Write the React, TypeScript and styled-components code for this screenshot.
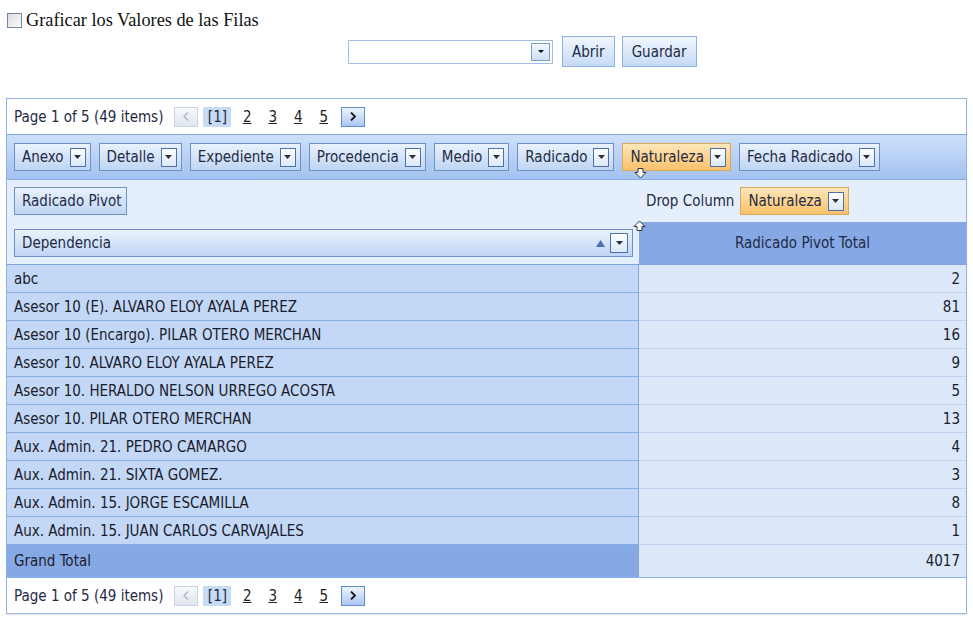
import React from "react";
import styled, { createGlobalStyle, css } from "styled-components";

const GlobalStyle = createGlobalStyle`
  html, body { margin: 0; padding: 0; background: #fff; }
  body { font-family: "DejaVu Sans Condensed", "DejaVu Sans", sans-serif; font-size: 15px; color: #1f2a44; }
`;

const Page = styled.div`
  width: 973px;
  height: 621px;
  overflow: hidden;
  position: relative;
`;

const CheckRow = styled.label`
  display: flex;
  align-items: center;
  gap: 4px;
  padding: 10px 0 0 7px;
  height: 21px;
  font-family: "Liberation Serif", serif;
  font-size: 18.3px;
  color: #111;
`;

const CheckBox = styled.span`
  width: 13px;
  height: 13px;
  border: 1px solid #6f86a6;
  background: linear-gradient(135deg, #dcdcdc, #fbfbfb);
  box-sizing: content-box;
`;

const ToolRow = styled.div`
  display: flex;
  align-items: center;
  gap: 7px;
  margin-top: 5px;
  padding-left: 348px;
  height: 31px;
`;

const Combo = styled.div`
  width: 205px;
  height: 24px;
  box-sizing: border-box;
  border: 1px solid #a2bde6;
  background: #fff;
  display: flex;
  justify-content: flex-end;
  align-items: center;
  padding-right: 2px;
  margin-right: 2px;
`;

const ComboBtn = styled.span`
  width: 19px;
  height: 18px;
  box-sizing: border-box;
  border: 1px solid #7b9dd2;
  background: linear-gradient(#f3f7fd, #cddff6);
  display: flex;
  align-items: center;
  justify-content: center;
`;

const Btn = styled.button`
  height: 31px;
  padding: 0 9px;
  border: 1px solid #8eb0e6;
  background: linear-gradient(#f1f6fe, #c6dbf6);
  font-family: inherit;
  font-size: 15px;
  color: #1f2a44;
`;

const Pivot = styled.div`
  margin: 31px 0 0 6px;
  width: 961px;
  box-sizing: border-box;
  border: 1px solid #8eb3ea;
  border-bottom-color: #9fbde8;
  position: relative;
  box-shadow: 0 1px 1px #e3e6ea;
`;

const Pager = styled.div<{ $bottom?: boolean }>`
  height: 35px;
  display: flex;
  align-items: center;
  padding-left: 7px;
  background: #fff;
  ${(p) =>
    p.$bottom
      ? css`
          border-top: 1px solid #8eb3ea;
        `
      : css`
          border-bottom: 1px solid #7fa6e3;
        `}
`;

const PagerSummary = styled.span`
  margin-right: 11px;
  white-space: nowrap;
`;

const PagerNav = styled.span<{ $enabled?: boolean }>`
  width: 24px;
  height: 20px;
  box-sizing: border-box;
  display: inline-flex;
  align-items: center;
  justify-content: center;
  ${(p) =>
    p.$enabled
      ? css`
          border: 1px solid #5e8bd4;
          background: linear-gradient(#eef4fd, #a9c7f1);
        `
      : css`
          border: 1px solid #c8d4e4;
          background: linear-gradient(#f7f8fa, #dfe6ef);
        `}
`;

const PageCurrent = styled.span`
  margin-left: 5px;
  width: 28px;
  height: 20px;
  display: inline-flex;
  align-items: center;
  justify-content: center;
  background: #c8dbf5;
  margin-right: 3px;
`;

const PageLink = styled.span`
  width: 25.5px;
  text-align: center;
  text-decoration: underline;
  color: #222;
`;

const FilterBand = styled.div`
  height: 44px;
  background: linear-gradient(#cde0fa, #a3c2ef);
  border-bottom: 1px solid #86ace5;
  display: flex;
  align-items: center;
  gap: 8px;
  padding: 0 0 0 7px;
`;

const Field = styled.div<{ $active?: boolean }>`
  height: 28px;
  box-sizing: border-box;
  display: flex;
  align-items: center;
  gap: 6px;
  padding: 0 4px 0 7px;
  white-space: nowrap;
  border: 1px solid #6f90c7;
  background: linear-gradient(#eaf2fd, #bfd5f4);
  color: #1f2a44;
  ${(p) =>
    p.$active &&
    css`
      border-color: #d9a85c;
      background: linear-gradient(#fde6b8, #fbc26d);
    `}
`;

const FieldGrow = styled(Field)`
  flex: 1;
  justify-content: space-between;
`;

const DropBtn = styled.span<{ $big?: boolean }>`
  width: ${(p) => (p.$big ? 18 : 16)}px;
  height: ${(p) => (p.$big ? 20 : 19)}px;
  box-sizing: border-box;
  border: 1px solid #4d70ab;
  background: linear-gradient(#ffffff, #dbe7f8);
  display: flex;
  align-items: center;
  justify-content: center;
`;

const Grid = styled.div`
  display: grid;
  grid-template-columns: 632px 327px;
`;

const AreaCell = styled.div`
  height: 42px;
  background: #e4eefc;
  display: flex;
  align-items: center;
  padding: 0 7px;
`;

const RowArea = styled(AreaCell)`
  height: 43px;
  box-sizing: border-box;
  border-bottom: 1px solid #7fa6e3;
  padding: 0 6px 0 7px;
`;

const DropLabel = styled.span`
  margin-right: 6px;
`;

const TotalHeader = styled.div`
  height: 43px;
  box-sizing: border-box;
  background: #86a9e5;
  border-bottom: 1px solid #7fa6e3;
  display: flex;
  align-items: center;
  justify-content: center;
`;

const RowHead = styled.div<{ $total?: boolean }>`
  height: ${(p) => (p.$total ? 32 : 28)}px;
  box-sizing: border-box;
  display: flex;
  align-items: center;
  padding-left: 7px;
  background: ${(p) => (p.$total ? "#86a9e5" : "#c3d8f6")};
  border-right: 1px solid #7fa6e3;
  border-bottom: 1px solid ${(p) => (p.$total ? "#86a9e5" : "#86ace7")};
  color: #1b1b2b;
  white-space: nowrap;
`;

const DataCell = styled.div<{ $total?: boolean }>`
  height: ${(p) => (p.$total ? 32 : 28)}px;
  box-sizing: border-box;
  display: flex;
  align-items: center;
  justify-content: flex-end;
  padding-right: 6px;
  background: #dce8f9;
  border-bottom: 1px solid ${(p) => (p.$total ? "#dce8f9" : "#bed3f1")};
  color: #1b1b2b;
`;

const SortTri = styled.span`
  display: flex;
  align-items: center;
  gap: 5px;
`;

const DragArrow = styled.svg<{ $x: number; $y: number }>`
  position: absolute;
  left: ${(p) => p.$x}px;
  top: ${(p) => p.$y}px;
`;

const Tri = () => (
  <svg width="7" height="4" viewBox="0 0 7 4">
    <path d="M0 0H7L3.5 4Z" fill="#2a2f3a" />
  </svg>
);

const Dd = ({ big }: { big?: boolean }) => (
  <DropBtn $big={big}>
    <Tri />
  </DropBtn>
);

const Chevron = ({ dir, color }: { dir: "l" | "r"; color: string }) => (
  <svg width="6" height="9" viewBox="0 0 6 9">
    <path
      d={dir === "l" ? "M5 0.5L1 4.5L5 8.5" : "M1 0.5L5 4.5L1 8.5"}
      fill="none"
      stroke={color}
      strokeWidth={dir === "r" ? 1.8 : 1.2}
    />
  </svg>
);

const PagerBar = ({ bottom }: { bottom?: boolean }) => (
  <Pager $bottom={bottom}>
    <PagerSummary>Page 1 of 5 (49 items)</PagerSummary>
    <PagerNav>
      <Chevron dir="l" color="#a7b1c2" />
    </PagerNav>
    <PageCurrent>[1]</PageCurrent>
    {["2", "3", "4", "5"].map((n) => (
      <PageLink key={n}>{n}</PageLink>
    ))}
    <PagerNav $enabled style={{ marginLeft: 5 }}>
      <Chevron dir="r" color="#1a1a1a" />
    </PagerNav>
  </Pager>
);

const fields = ["Anexo", "Detalle", "Expediente", "Procedencia", "Medio", "Radicado", "Naturaleza", "Fecha Radicado"];

const rows: [string, string][] = [
  ["abc", "2"],
  ["Asesor 10 (E). ALVARO ELOY AYALA PEREZ", "81"],
  ["Asesor 10 (Encargo). PILAR OTERO MERCHAN", "16"],
  ["Asesor 10. ALVARO ELOY AYALA PEREZ", "9"],
  ["Asesor 10. HERALDO NELSON URREGO ACOSTA", "5"],
  ["Asesor 10. PILAR OTERO MERCHAN", "13"],
  ["Aux. Admin. 21. PEDRO CAMARGO", "4"],
  ["Aux. Admin. 21. SIXTA GOMEZ.", "3"],
  ["Aux. Admin. 15. JORGE ESCAMILLA", "8"],
  ["Aux. Admin. 15. JUAN CARLOS CARVAJALES", "1"],
];

const DownArrow = ({ x, y }: { x: number; y: number }) => (
  <DragArrow $x={x} $y={y} width="13" height="11" viewBox="0 0 13 11">
    <path d="M4 0.5H9V4.5H12L6.5 10L1 4.5H4Z" fill="#fff" stroke="#333" strokeWidth="1" />
  </DragArrow>
);

const UpArrow = ({ x, y }: { x: number; y: number }) => (
  <DragArrow $x={x} $y={y} width="13" height="11" viewBox="0 0 13 11">
    <path d="M4 10.5H9V6.5H12L6.5 1L1 6.5H4Z" fill="#fff" stroke="#333" strokeWidth="1" />
  </DragArrow>
);

export default function App() {
  return (
    <Page>
      <GlobalStyle />
      <CheckRow>
        <CheckBox />
        Graficar los Valores de las Filas
      </CheckRow>
      <ToolRow>
        <Combo>
          <ComboBtn>
            <svg width="6" height="3" viewBox="0 0 6 3">
              <path d="M0 0H6L3 3Z" fill="#111" />
            </svg>
          </ComboBtn>
        </Combo>
        <Btn>Abrir</Btn>
        <Btn>Guardar</Btn>
      </ToolRow>
      <Pivot>
        <PagerBar />
        <FilterBand>
          {fields.map((f) => (
            <Field key={f} $active={f === "Naturaleza"}>
              {f}
              <Dd />
            </Field>
          ))}
        </FilterBand>
        <Grid>
          <AreaCell>
            <Field>Radicado Pivot</Field>
          </AreaCell>
          <AreaCell>
            <DropLabel>Drop Column</DropLabel>
            <Field $active>
              Naturaleza
              <Dd />
            </Field>
          </AreaCell>
          <RowArea>
            <FieldGrow>
              Dependencia
              <SortTri>
                <svg width="9" height="7" viewBox="0 0 9 7">
                  <path d="M0 7H9L4.5 0Z" fill="#4a6fae" />
                </svg>
                <Dd big />
              </SortTri>
            </FieldGrow>
          </RowArea>
          <TotalHeader>Radicado Pivot Total</TotalHeader>
          {rows.map(([name, val]) => (
            <React.Fragment key={name}>
              <RowHead>{name}</RowHead>
              <DataCell>{val}</DataCell>
            </React.Fragment>
          ))}
          <RowHead $total>Grand Total</RowHead>
          <DataCell $total>4017</DataCell>
        </Grid>
        <PagerBar bottom />
        <DownArrow x={627} y={69} />
        <UpArrow x={626} y={121} />
      </Pivot>
    </Page>
  );
}
